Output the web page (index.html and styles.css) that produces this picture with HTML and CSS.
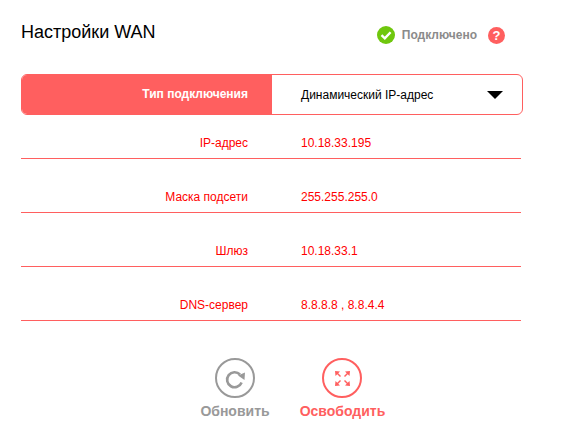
FILE: index.html
```html
<!DOCTYPE html>
<html lang="ru">
<head>
    <meta charset="UTF-8">
    <title>Настройки WAN</title>
    <link rel="stylesheet" href="styles.css">
</head>
<body>

<div class="page">
    <div class="header">
        <h1 class="title">Настройки WAN</h1>
        <div class="status">
            <svg class="status-icon" viewBox="0 0 18 18" width="18" height="18">
                <circle cx="9" cy="9" r="9" fill="#6fc70d"/>
                <path d="M4.5 9.2 L7.8 12.4 L13.6 6.2" fill="none" stroke="#fff" stroke-width="2.4"/>
            </svg>
            <span class="status-text">Подключено</span>
            <span class="help">?</span>
        </div>
    </div>

    <div class="type-row">
        <div class="type-label">Тип подключения</div>
        <div class="type-select">
            <span>Динамический IP-адрес</span>
            <span class="arrow"></span>
        </div>
    </div>

    <div class="info-row">
        <div class="info-label">IP-адрес</div>
        <div class="info-value">10.18.33.195</div>
    </div>
    <div class="info-row">
        <div class="info-label">Маска подсети</div>
        <div class="info-value">255.255.255.0</div>
    </div>
    <div class="info-row">
        <div class="info-label">Шлюз</div>
        <div class="info-value">10.18.33.1</div>
    </div>
    <div class="info-row">
        <div class="info-label">DNS-сервер</div>
        <div class="info-value">8.8.8.8 , 8.8.4.4</div>
    </div>

    <div class="actions">
        <div class="action action-renew">
            <svg viewBox="0 0 40 40" width="40" height="40">
                <circle cx="20" cy="20" r="19" fill="none" stroke="#999" stroke-width="2"/>
                <path d="M25 16.5 A7.5 7.5 0 1 0 26.6 24.5" fill="none" stroke="#999" stroke-width="2.6"/>
                <path d="M23 17.5 L30 14.5 L29.5 22 Z" fill="#999"/>
            </svg>
            <span>Обновить</span>
        </div>
        <div class="action action-release">
            <svg viewBox="0 0 40 40" width="40" height="40">
                <circle cx="20" cy="20" r="19" fill="none" stroke="#ff5f5f" stroke-width="2"/>
                <g fill="#ff5f5f">
                    <path d="M13 13 L18 13.5 L13.5 18 Z"/>
                    <path d="M28 13 L27.5 18 L23 13.5 Z"/>
                    <path d="M13 28 L13.5 23 L18 27.5 Z"/>
                    <path d="M28 28 L23 27.5 L27.5 23 Z"/>
                </g>
                <g stroke="#ff5f5f" stroke-width="1.4">
                    <path d="M15 15 L18.5 18.5"/>
                    <path d="M26 15 L22.5 18.5"/>
                    <path d="M15 26 L18.5 22.5"/>
                    <path d="M26 26 L22.5 22.5"/>
                </g>
            </svg>
            <span>Освободить</span>
        </div>
    </div>
</div>

</body>
</html>
```

FILE: styles.css
```css
body {
    margin: 0;
    background-color: #fff;
    font-family: "Liberation Sans", Arial, sans-serif;
}

.page {
    width: 502px;
    padding: 21px 0 0 21px;
}

.header {
    display: flex;
    justify-content: space-between;
    align-items: flex-start;
    height: 53px;
}

.title {
    margin: 0;
    font-size: 18px;
    font-weight: normal;
    line-height: 22px;
    color: #000;
}

.status {
    display: flex;
    align-items: center;
    margin: 5px 18px 0 0;
}

.status-text {
    margin: 0 11px 0 7px;
    font-size: 12px;
    font-weight: bold;
    color: #8b8b8b;
}

.help {
    width: 17px;
    height: 17px;
    border-radius: 50%;
    background-color: #ff5f5f;
    color: #fff;
    font-size: 13px;
    font-weight: bold;
    line-height: 17px;
    text-align: center;
}

.type-row {
    display: flex;
    height: 41px;
    box-sizing: border-box;
    border: 1px solid #ff5f5f;
    border-radius: 6px;
    overflow: hidden;
}

.type-label {
    width: 250px;
    padding-right: 24px;
    box-sizing: border-box;
    background-color: #ff5f5f;
    color: #fff;
    font-size: 12px;
    font-weight: bold;
    line-height: 39px;
    text-align: right;
}

.type-select {
    flex: 1;
    display: flex;
    justify-content: space-between;
    align-items: center;
    padding: 0 19px 0 29px;
    font-size: 12px;
    color: #000;
}

.arrow {
    width: 0;
    height: 0;
    border-left: 8px solid transparent;
    border-right: 8px solid transparent;
    border-top: 8px solid #000;
}

.info-row {
    display: flex;
    width: 500px;
    height: 54px;
    box-sizing: border-box;
    border-bottom: 1px solid #ff5f5f;
    align-items: flex-end;
    padding-bottom: 8px;
    font-size: 12px;
    line-height: 14px;
    color: #f00;
}

.type-row + .info-row {
    height: 44px;
}

.info-label {
    width: 227px;
    text-align: right;
}

.info-value {
    margin-left: 53px;
}

.actions {
    display: flex;
    margin-top: 37px;
    padding-left: 179px;
    gap: 30px;
}

.action {
    display: flex;
    flex-direction: column;
    align-items: center;
    gap: 5px;
    width: 85px;
    font-size: 14px;
    font-weight: bold;
    line-height: 17px;
}

.action-renew {
    color: #999;
    width: 70px;
}

.action-release {
    color: #ff5f5f;
}

.action-release svg {
    margin-right: 2px;
}
```
